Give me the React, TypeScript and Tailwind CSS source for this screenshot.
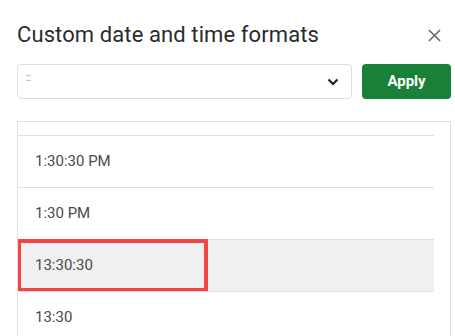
import React from 'react';

const rows = ['1:30:30 PM', '1:30 PM', '13:30:30', '13:30'];

const App: React.FC = () => {
  return (
    <div className="w-[455px] h-[336px] overflow-hidden bg-white pl-[17px] font-['Roboto',sans-serif]">
      <div className="flex items-center justify-between pt-[20px] pr-[14px] h-[50px]">
        <h2 className="text-[22px] leading-[30px] text-[#2a2b2d] font-['Roboto',sans-serif] tracking-[0.1px]">
          Custom date and time formats
        </h2>
        <svg width="13" height="13" viewBox="0 0 14 14" className="text-[#5f6368]">
          <path d="M1 1L13 13M13 1L1 13" stroke="currentColor" strokeWidth="1.6" />
        </svg>
      </div>

      <div className="flex gap-[10px] mt-[14px] h-[35px]">
        <div className="w-[335px] h-full border border-[#dadce0] rounded-[4px] flex items-start justify-between pl-[8px] pr-[12px]">
          <span className="text-[10px] leading-[10px] mt-[8px] text-[#777]">::</span>
          <svg width="12" height="8" viewBox="0 0 12 8" className="self-center mt-[1px]">
            <path d="M1.5 1.5L6 6L10.5 1.5" fill="none" stroke="#202124" strokeWidth="2.2" />
          </svg>
        </div>
        <button className="w-[89px] h-full rounded-[4px] bg-[#188038] text-white text-[15px] font-bold">
          Apply
        </button>
      </div>

      <div className="mt-[22px] w-[434px] h-[300px] border border-[#e0e0e0] overflow-hidden">
        <div className="h-[13px] mr-[16px]" />
        {rows.map((r) => {
          const selected = r === '13:30:30';
          return (
            <div
              key={r}
              className={
                'relative h-[52px] mr-[16px] border-t border-[#e0e0e0] flex items-center pl-[17px] text-[15px] text-[#4a4a4a] ' +
                (selected ? 'bg-[#f0f0f0]' : 'bg-white')
              }
            >
              {r}
              {selected && (
                <div className="absolute left-[-1px] top-[-1px] w-[191px] h-[53px] border-[4px] border-[#f44545]" />
              )}
            </div>
          );
        })}
      </div>
    </div>
  );
};

export default App;
